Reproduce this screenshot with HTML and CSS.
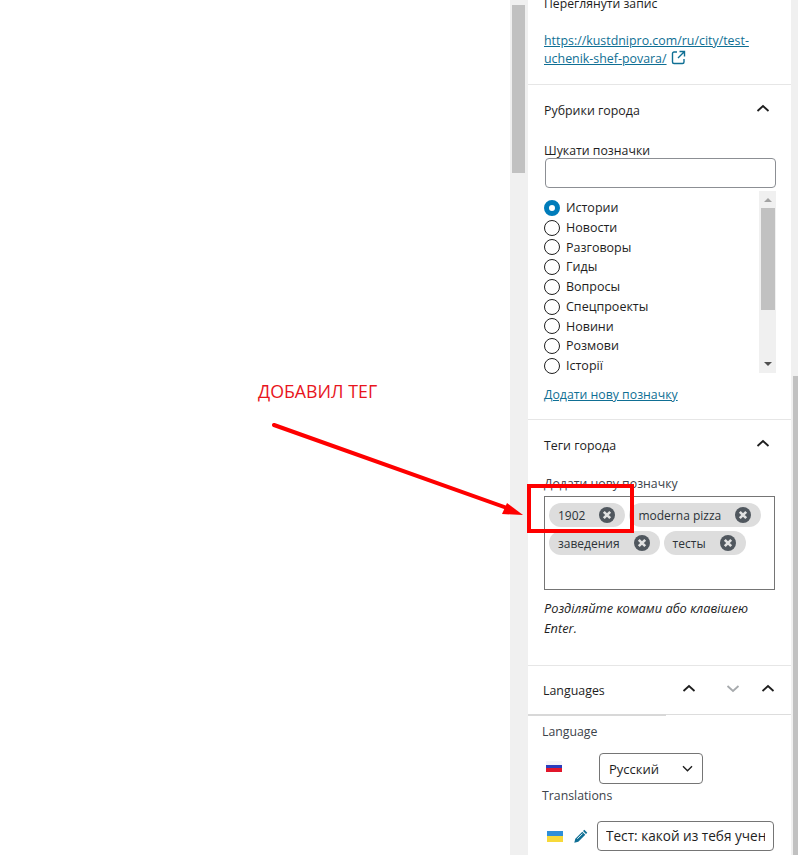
FILE: index.html
```html
<!DOCTYPE html>
<html lang="uk">
<head>
<meta charset="utf-8">
<title>Теги города</title>
<link rel="stylesheet" href="styles.css">
</head>
<body>
<div class="app">
  <main class="canvas"></main>
  <div class="gutter"><div class="gutter-thumb"></div></div>
  <aside class="panel">
    <section class="sec sec-view">
      <p class="view-label">Переглянути запис</p>
      <p class="view-link"><a href="#">https://kustdnipro.com/ru/city/test-uchenik-shef-povara/</a>
        <svg class="ext" width="15" height="15" viewBox="0 0 15 15"><path d="M6 2H3a1.5 1.5 0 0 0-1.5 1.500v8.500A1.500 1.500 0 0 0 3 13.500h8.500a1.500 1.500 0 0 0 1.500-1.500V9M8.500 1.500h5v5M13.500 1.500L7 8" fill="none" stroke="#0f6f94" stroke-width="1.400"/></svg></p>
    </section>
    <section class="sec sec-cat">
      <header class="sec-head"><h2>Рубрики города</h2><svg class="chev" width="14" height="9" viewBox="0 0 14 9"><path d="M1.500 7L7 2l5.500 5" fill="none" stroke="#1e1e1e" stroke-width="1.800"/></svg></header>
      <label class="search-label">Шукати позначки</label>
      <div class="search-input"></div>
      <div class="list-wrap">
        <ul class="radios">
          <li><span class="radio on"></span>Истории</li>
          <li><span class="radio"></span>Новости</li>
          <li><span class="radio"></span>Разговоры</li>
          <li><span class="radio"></span>Гиды</li>
          <li><span class="radio"></span>Вопросы</li>
          <li><span class="radio"></span>Спецпроекты</li>
          <li><span class="radio"></span>Новини</li>
          <li><span class="radio"></span>Розмови</li>
          <li><span class="radio"></span>Історії</li>
        </ul>
        <div class="list-bar">
          <span class="tri up"></span>
          <div class="list-thumb"></div>
          <span class="tri down"></span>
        </div>
      </div>
      <a class="add-link" href="#">Додати нову позначку</a>
    </section>
    <section class="sec sec-tags">
      <header class="sec-head"><h2>Теги города</h2><svg class="chev" width="14" height="9" viewBox="0 0 14 9"><path d="M1.500 7L7 2l5.500 5" fill="none" stroke="#1e1e1e" stroke-width="1.800"/></svg></header>
      <label class="tag-label">Додати нову позначку</label>
      <div class="tag-box">
        <span class="tag">1902<svg class="x" viewBox="0 0 16 16"><circle cx="8" cy="8" r="8" fill="#50575e"/><path d="M4.800 4.800l6.400 6.400M11.200 4.800l-6.400 6.400" stroke="#e2e2e2" stroke-width="2.600"/></svg></span>
        <span class="tag">moderna pizza<svg class="x" viewBox="0 0 16 16"><circle cx="8" cy="8" r="8" fill="#50575e"/><path d="M4.800 4.800l6.400 6.400M11.200 4.800l-6.400 6.400" stroke="#e2e2e2" stroke-width="2.600"/></svg></span>
        <span class="tag">заведения<svg class="x" viewBox="0 0 16 16"><circle cx="8" cy="8" r="8" fill="#50575e"/><path d="M4.800 4.800l6.400 6.400M11.200 4.800l-6.400 6.400" stroke="#e2e2e2" stroke-width="2.600"/></svg></span>
        <span class="tag">тесты<svg class="x" viewBox="0 0 16 16"><circle cx="8" cy="8" r="8" fill="#50575e"/><path d="M4.800 4.800l6.400 6.400M11.200 4.800l-6.400 6.400" stroke="#e2e2e2" stroke-width="2.600"/></svg></span>
      </div>
      <p class="hint">Розділяйте комами або клавішею Enter.</p>
    </section>
    <section class="sec-lang">
      <header class="lang-head">
        <h2>Languages</h2>
        <svg class="chev" width="14" height="9" viewBox="0 0 14 9"><path d="M1.500 7L7 2l5.500 5" fill="none" stroke="#1e1e1e" stroke-width="1.800"/></svg>
        <svg class="chev" width="14" height="9" viewBox="0 0 14 9"><path d="M1.500 2L7 7l5.500-5" fill="none" stroke="#a7aaad" stroke-width="1.800"/></svg>
        <svg class="chev" width="14" height="9" viewBox="0 0 14 9"><path d="M1.500 7L7 2l5.500 5" fill="none" stroke="#1e1e1e" stroke-width="1.800"/></svg>
      </header>
      <div class="lang-body">
        <div class="lang-title">Language</div>
        <div class="lang-row">
          <span class="flag flag-ru"></span>
          <div class="select">Русский<svg width="11" height="7" viewBox="0 0 11 7"><path d="M1 1.200l4.500 4.500L10 1.200" fill="none" stroke="#1e1e1e" stroke-width="1.400"/></svg></div>
        </div>
        <div class="lang-title lang-title-next">Translations</div>
        <div class="trans-row">
          <span class="flag flag-ua"></span>
          <svg class="pencil" width="14" height="14" viewBox="0 0 14 14"><path d="M10.300 0.700l3 3-1.300 1.300-3-3zM8.300 2.700l3 3-7 7-4 1 1-4z" fill="#0f6f94"/><path d="M3.300 9.800l5.200-5.200" stroke="#fff" stroke-width="0.900"/></svg>
          <div class="trans-input"><span>Тест: какой из тебя ученик шеф-повара</span></div>
        </div>
      </div>
    </section>
  </aside>
  <div class="rail"><div class="rail-thumb"></div></div>
  <div class="note">ДОБАВИЛ ТЕГ</div>
  <svg class="marks" width="798" height="855" viewBox="0 0 798 855">
    <path d="M274 425L510 509" fill="none" stroke="#fe0000" stroke-width="4" stroke-linecap="round"/>
    <path d="M523 515L502 514L507 503z" fill="#fe0000"/>
    <rect x="529" y="486" width="103" height="45" fill="none" stroke="#fe0000" stroke-width="4"/>
  </svg>
</div>
</body>
</html>
```
FILE: styles.css
```css
* { box-sizing: border-box; }
html, body { margin: 0; padding: 0; background: #fff; }
body { font-family: "Open Sans", "Noto Sans", sans-serif; font-size: 12.300px; color: #1e1e1e; overflow: hidden; }
h2, p, ul { margin: 0; padding: 0; }
a { color: #0f6f94; }
.app { position: relative; display: flex; width: 798px; height: 855px; overflow: hidden; }
.canvas { flex: 0 0 510px; background: #fff; }
.gutter { flex: 0 0 18px; background: #f0f0f0; padding: 5px 3px 0 2px; }
.gutter-thumb { height: 168px; background: #c1c1c1; }
.panel { flex: 0 0 263px; background: #fff; height: 855px; overflow: hidden; }
.rail { flex: 0 0 7px; background: #f0f0f0; padding: 376px 0 0 2px; }
.rail-thumb { height: 479px; background: #c1c1c1; }
.sec { padding: 0 16px; border-bottom: 1px solid #e6e6e6; }
.sec-view { height: 91px; margin-top: -6px; }
.view-label { line-height: 20px; font-size: 12.200px; }
.view-link { margin-top: 18px; line-height: 18px; width: 222px; font-size: 12.400px; }
.view-link a { text-underline-offset: 1px; }
.ext { vertical-align: -2px; margin-left: 1px; }
.sec-head { display: flex; align-items: center; justify-content: space-between; padding-right: 5px; height: 20px; }
.chev { flex: none; }
.sec-head .chev { margin-bottom: 4px; }
.sec-head h2, .lang-head h2 { font-size: 12.400px; font-weight: 500; color: #1e1e1e; }
.sec-cat { height: 335px; padding-top: 15px; }
.search-label { display: block; margin-top: 22px; line-height: 18px; }
.search-input { width: 231px; height: 30px; margin: -2px 0 0 1px; border: 1px solid #8c8f94; border-radius: 4px; }
.list-wrap { display: flex; justify-content: space-between; height: 182px; margin-top: 3px; width: 232px; }
.radios { list-style: none; flex: 1; padding-top: 7px; font-size: 12.500px; }
.radios li { display: flex; align-items: center; height: 19.750px; line-height: 19.750px; }
.radio { flex: none; width: 16px; height: 16px; margin-right: 6px; border: 1.500px solid #1e1e1e; border-radius: 50%; background: #fff; }
.radio.on { border: 5px solid #007cba; }
.list-bar { flex: 0 0 17px; background: #f0f0f0; display: flex; flex-direction: column; align-items: center; padding: 0 1px; }
.list-thumb { width: 14px; height: 102px; margin-top: 6px; background: #c1c1c1; }
.tri { width: 0; height: 0; border-left: 4px solid transparent; border-right: 4px solid transparent; }
.tri.up { margin-top: 7px; border-bottom: 4px solid #a3a3a3; }
.tri.down { margin-top: auto; margin-bottom: 7px; border-top: 4px solid #505050; }
.add-link { display: block; margin-top: 13px; line-height: 18px; }
.sec-tags { height: 246px; padding-top: 15px; }
.tag-label { display: block; margin-top: 20px; line-height: 18px; color: #3c434a; }
.tag-box { display: flex; flex-wrap: wrap; align-content: flex-start; gap: 4px; width: 231px; height: 94px; margin-top: 3px; padding: 6px 4px; border: 1px solid #757575; }
.tag { display: inline-flex; align-items: center; height: 24px; padding: 0 10px 0 9px; gap: 14px; background: #ddd; border-radius: 12px; color: #2c3338; font-size: 12px; }
.x { flex: none; width: 16px; height: 16px; }
.hint { margin-top: 8px; line-height: 20px; font-style: italic; font-size: 12.800px; width: 222px; }
.lang-head { display: flex; align-items: center; height: 49px; border-bottom: 1px solid #ddd; }
.lang-head h2 { flex: 0 0 138px; align-self: stretch; display: flex; align-items: center; height: 50px; padding-left: 15px; border-bottom: 2px solid #d8d8d8; }
.lang-head .chev { margin-bottom: 3px; }
.lang-head .chev:nth-of-type(1) { margin-left: 16px; }
.lang-head .chev:nth-of-type(2) { margin-left: 30px; }
.lang-head .chev:nth-of-type(3) { margin-left: 21px; }
.lang-body { padding: 8px 14px 0; }
.lang-title { line-height: 18px; font-weight: 500; color: #3c434a; }
.lang-title-next { margin-top: 3px; }
.lang-row { display: flex; align-items: center; margin-top: 12px; height: 31px; }
.flag { display: block; width: 16px; height: 11px; }
.flag-ru { background: linear-gradient(#f4f4f8 33%, #2b3dbd 33% 66%, #e1162b 66%); margin: 0 37px 4px 4px; }
.flag-ua { background: linear-gradient(#2f8fd8 50%, #f7d93a 50%); margin-right: 11px; margin-left: 5px; }
.select { display: flex; align-items: center; justify-content: space-between; width: 104px; height: 31px; padding: 0 9px 0 9px; border: 1px solid #757575; border-radius: 4px; font-size: 13px; }
.trans-row { display: flex; align-items: center; margin-top: 16px; }
.pencil { flex: none; }
.trans-input { flex: none; width: 177px; height: 30px; margin-left: 9px; padding: 0 8px; line-height: 28px; border: 1px solid #757575; border-radius: 4px; font-size: 13.600px; }
.trans-input span { display: block; overflow: hidden; white-space: nowrap; }
.note { position: absolute; left: 258px; top: 379px; font-family: "Open Sans", sans-serif; font-size: 17.800px; line-height: 24px; color: #e8151d; }
.marks { position: absolute; left: 0; top: 0; pointer-events: none; }
```
